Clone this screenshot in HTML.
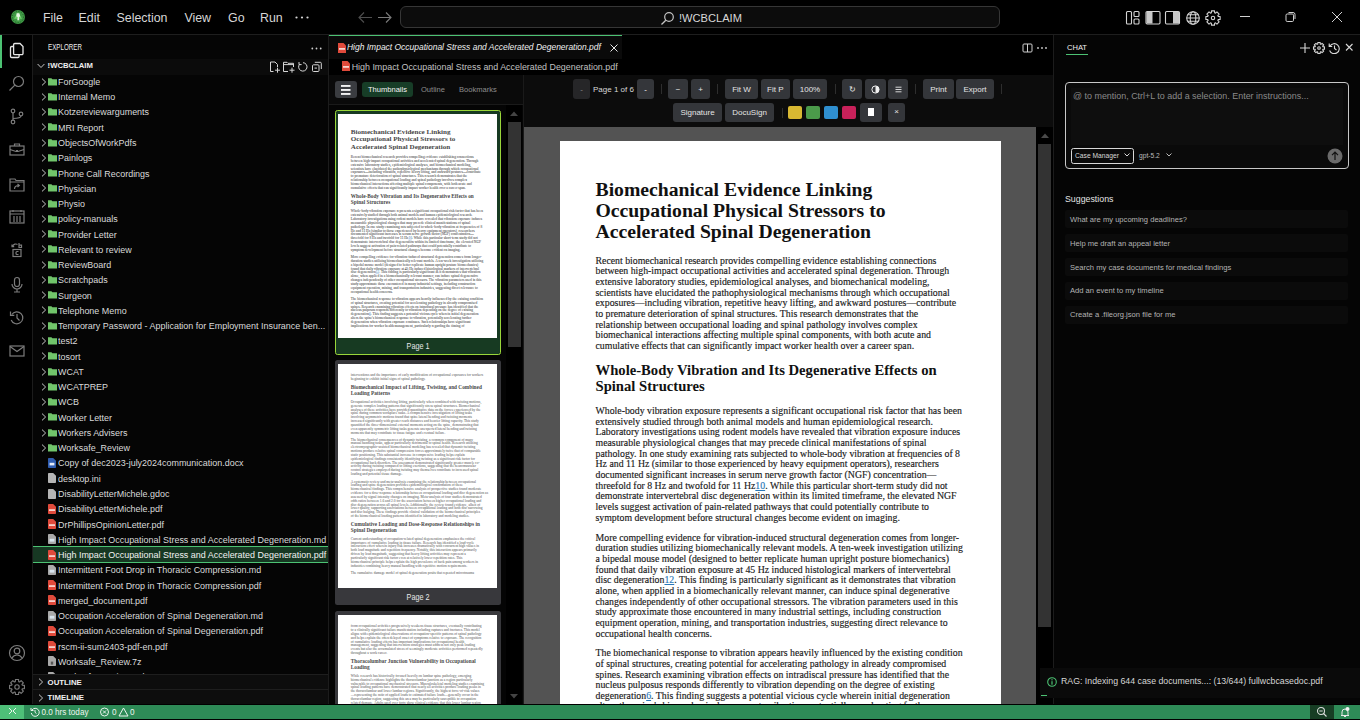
<!DOCTYPE html>
<html><head><meta charset="utf-8"><style>
*{box-sizing:border-box;margin:0;padding:0}
html,body{width:1360px;height:720px;overflow:hidden;background:#000}
body{position:relative;font-family:"Liberation Sans",sans-serif;color:#d4d4d4}
.abs{position:absolute}
/* title bar */
#tb{position:absolute;left:0;top:0;width:1360px;height:35px;background:#000;border-bottom:1px solid #1e1e1e}
.menu{position:absolute;top:10.5px;font-size:12.4px;line-height:14px;color:#d6d6d6;white-space:nowrap}
#search{position:absolute;left:400px;top:6px;width:600px;height:22px;background:#0c0c0c;border:1px solid #363636;border-radius:6px}
#search .t{position:absolute;left:278px;top:5px;font-size:11.1px;line-height:13px;color:#d8d8d8}
/* activity */
#act{position:absolute;left:0;top:35px;width:33px;height:669px;background:#000;border-right:1px solid #1c1c1c}
.ai{position:absolute;left:8px}
/* sidebar */
#side{position:absolute;left:33px;top:35px;width:296px;height:669px;background:#050505;border-right:1px solid #1c1c1c;overflow:hidden}
#side .hdr{position:absolute;left:14.6px;top:7.6px;font-size:8.2px;line-height:9px;color:#ececec;transform:scaleX(0.76);transform-origin:0 0}
#side .dots{position:absolute;left:278px;top:6px;font-size:10px;color:#cfcfcf;letter-spacing:0.5px}
#root{position:absolute;left:0;top:23.7px;width:295px;height:15.9px;background:#0b0b0b}
#root .tx{position:absolute;left:14.6px;top:2.5px;font-weight:bold;font-size:7.7px;line-height:10px;color:#f0f0f0}
#tree{position:absolute;left:0;top:23.7px;width:295px;height:615.2px;overflow:hidden}
.row{position:absolute;left:0;width:295px;height:15.26px;white-space:nowrap}
.row .ch{position:absolute;left:7.5px;top:3.8px}
.row .fi{position:absolute;left:15px;top:2.8px}
.row .tx{position:absolute;left:25px;top:2.2px;font-size:9.6px;line-height:11px;color:#dadada;transform:scaleX(0.933);transform-origin:0 0}
.row.sel{background:#173823;border-top:1px solid #4cc273;border-bottom:1px solid #4cc273;height:16.5px;margin-top:-0.5px}
.row.sel .tx{color:#f2f2f2;top:2.1px}
.row.sel .fi{top:3px}
.sec{position:absolute;left:0;width:295px;height:15.3px;background:#0d0d0d;border-top:1px solid #1e1e1e}
.sec .tx{position:absolute;left:14.6px;top:2.8px;font-weight:bold;font-size:7.8px;line-height:10px;color:#f0f0f0}
.sec .ch{position:absolute;left:5px;top:3.5px}
/* editor */
#ed{position:absolute;left:329px;top:35px;width:725px;height:669px;background:#000;border-right:1px solid #1c1c1c;overflow:hidden}
#tab{position:absolute;left:0;top:0;width:293px;height:23.5px;background:#0a0a0a;border-top:1px solid #4cc273}
#tab .tx{position:absolute;left:18px;top:5.5px;font-style:italic;font-size:8.47px;line-height:11px;color:#f0f0f0;white-space:nowrap}
#crumb{position:absolute;left:22.7px;top:26.5px;font-size:8.9px;line-height:11px;color:#c0c0c0;white-space:nowrap}
#pdfbar{position:absolute;left:0;top:40px;width:724px;height:52px;background:#0c0c0c}
.btn{position:absolute;height:19.5px;background:#34363a;border-radius:3px;color:#e4e4e4;font-size:8px;line-height:21px;text-align:center;white-space:nowrap}
.sep{position:absolute;width:1px;height:10px;background:#2e2e2e}
#thumbs{position:absolute;left:0;top:69px;width:194px;height:600px;background:#050505;border-top:1px solid #1a1a1a;overflow:hidden}
#viewer{position:absolute;left:195px;top:92px;width:529px;height:580px;background:#535353;overflow:hidden}
#vscroll{position:absolute;right:0;top:0;width:17px;height:580px;background:#000}
.page{position:absolute;background:#fff;overflow:hidden;color:#111}
.blk{position:absolute;left:35.5px;white-space:nowrap}
.tt{font-family:"Liberation Serif",serif;font-weight:bold;font-size:19.7px;line-height:21.05px;color:#111}
.h2{font-family:"Liberation Serif",serif;font-weight:bold;font-size:14.67px;line-height:16.2px;color:#111}
.bp{font-family:"Liberation Serif",serif;font-size:9.82px;line-height:10.65px;color:#1a1a1a;-webkit-text-stroke:0.15px #1a1a1a}
.bp a{color:#2a78b8;text-decoration:underline;-webkit-text-stroke:0.15px #2a78b8}
.flow{position:absolute;left:35.5px;white-space:nowrap;font-family:"Liberation Serif",serif}
.fp{font-size:9.82px;line-height:10.65px;margin-bottom:9.3px;color:#1a1a1a}
.fh{font-weight:bold;font-size:14.67px;line-height:16.2px;margin:0.5px 0 10.5px;color:#111}
.card{position:absolute;left:6px;width:166px;border-radius:2.5px}
.card .pg{position:absolute;left:3px;top:3.5px;width:159px;height:224px;background:#fff;overflow:hidden}
.card .inner{position:absolute;left:0;top:0;width:441px;height:622px;transform:scale(0.3605);transform-origin:0 0;opacity:0.8}
.card .lbl{position:absolute;left:0;width:166px;text-align:center;font-size:8.4px;line-height:10px;color:#e8e8e8;transform:scaleX(0.86)}
/* chat */
#chat{position:absolute;left:1054px;top:35px;width:306px;height:669px;background:#050505}
#status{position:absolute;left:0;top:704.6px;width:1360px;height:14.4px;background:#2e8b57}
.sug{left:10.7px;width:283.5px;height:18.2px;background:#0b0b0b;border-radius:2px}
.sug span{position:absolute;left:5.3px;top:4.6px;font-size:7.6px;line-height:10px;color:#b4b4b4;white-space:nowrap}

</style></head><body>
<div id="tb">
  <svg class="abs" style="left:10px;top:8.8px" width="16" height="16" viewBox="0 0 16 16"><circle cx="8" cy="8" r="7" fill="#3f9a45"/><circle cx="8" cy="8" r="5.6" fill="none" stroke="#1f5a26" stroke-width="0.9" stroke-dasharray="1.2 1.4"/><path d="M8 3.2l4 6.6H4z" fill="#6fd06a"/><path d="M6.6 4.2h2.8l.9 3.2-1.4.6.4 3.2H7.3l.4-3.2-1.4-.6z" fill="#e6f6e2"/></svg>
  <div class="menu" style="left:43px">File</div>
  <div class="menu" style="left:78.5px">Edit</div>
  <div class="menu" style="left:116.5px">Selection</div>
  <div class="menu" style="left:184.4px">View</div>
  <div class="menu" style="left:228px">Go</div>
  <div class="menu" style="left:260px">Run</div>
  <svg class="abs" style="left:295px;top:15.5px" width="14" height="3" viewBox="0 0 14 3"><circle cx="1.5" cy="1.5" r="1.1" fill="#d6d6d6"/><circle cx="7" cy="1.5" r="1.1" fill="#d6d6d6"/><circle cx="12.5" cy="1.5" r="1.1" fill="#d6d6d6"/></svg>
  <svg class="abs" style="left:357px;top:11px" width="36" height="13" viewBox="0 0 36 13"><path d="M15 6.5H2M7 1.5L2 6.5l5 5" fill="none" stroke="#4e4e4e" stroke-width="1.1"/><path d="M21 6.5h13M29 1.5l5 5-5 5" fill="none" stroke="#7a7a7a" stroke-width="1.1"/></svg>
  <div id="search">
    <svg class="abs" style="left:259px;top:3.5px" width="15" height="15" viewBox="0 0 15 15"><circle cx="9" cy="6" r="4.3" fill="none" stroke="#c4c4c4" stroke-width="1.2"/><path d="M5.8 9.2L1.5 13.5" stroke="#c4c4c4" stroke-width="1.3"/></svg>
    <div class="t">!WCBCLAIM</div>
  </div>
  <svg class="abs" style="left:1125px;top:9.5px" width="100" height="16" viewBox="0 0 100 16">
    <g fill="none" stroke="#d4d4d4" stroke-width="1.1">
      <rect x="1.5" y="1.5" width="5" height="12.5" rx="1"/><rect x="9" y="1.5" width="5" height="5" rx="1"/><rect x="9" y="9" width="5" height="5" rx="1"/>
      <rect x="21" y="1.5" width="14" height="12.5" rx="1.2"/>
      <rect x="40.5" y="1.5" width="14" height="12.5" rx="1.2"/>
      <circle cx="68" cy="8" r="6.3"/><ellipse cx="68" cy="8" rx="2.8" ry="6.3"/><path d="M61.7 8h12.6M62.6 4.8h10.8M62.6 11.2h10.8"/>
    </g>
    <rect x="21.5" y="2" width="6" height="11.5" fill="#c8c8c8"/>
    <rect x="48" y="2" width="6" height="11.5" fill="#c8c8c8"/>
    <path d="M86.35 2.86 L86.48 0.86 L89.52 0.86 L89.65 2.86 L90.47 3.20 L91.97 1.88 L94.12 4.03 L92.80 5.53 L93.14 6.35 L95.14 6.48 L95.14 9.52 L93.14 9.65 L92.80 10.47 L94.12 11.97 L91.97 14.12 L90.47 12.80 L89.65 13.14 L89.52 15.14 L86.48 15.14 L86.35 13.14 L85.53 12.80 L84.03 14.12 L81.88 11.97 L83.20 10.47 L82.86 9.65 L80.86 9.52 L80.86 6.48 L82.86 6.35 L83.20 5.53 L81.88 4.03 L84.03 1.88 L85.53 3.20z" fill="none" stroke="#d4d4d4" stroke-width="1.1" stroke-linejoin="round"/><circle cx="88" cy="8" r="1.7" fill="none" stroke="#d4d4d4" stroke-width="1.1"/>
  </svg>
  <svg class="abs" style="left:1238px;top:10px" width="110" height="14" viewBox="0 0 110 14">
    <path d="M2 6.5h10" stroke="#d0d0d0" stroke-width="1"/>
    <rect x="48" y="4" width="7.5" height="7.5" rx="1.2" fill="none" stroke="#d0d0d0" stroke-width="1"/><path d="M50.5 2.5h4.5a2 2 0 0 1 2 2V9" fill="none" stroke="#d0d0d0" stroke-width="1"/>
    <path d="M94 2l10 10M104 2L94 12" stroke="#d0d0d0" stroke-width="1"/>
  </svg>
</div>

<div id="act">
  <div class="abs" style="left:0;top:0;width:1.6px;height:33px;background:#4cc273"></div>
  <svg class="ai" style="top:6.5px" width="18" height="18" viewBox="0 0 18 18"><path d="M5.5 4.5h-1.8a1.2 1.2 0 0 0-1.2 1.2v8.6a1.2 1.2 0 0 0 1.2 1.2h6.2a1.2 1.2 0 0 0 1.2-1.2v-1.2" fill="none" stroke="#e6e6e6" stroke-width="1.3"/><path d="M6.8 1.5h5.2l3 3v7a1.2 1.2 0 0 1-1.2 1.2H6.8a1.2 1.2 0 0 1-1.2-1.2V2.7a1.2 1.2 0 0 1 1.2-1.2z" fill="none" stroke="#e6e6e6" stroke-width="1.3"/></svg><svg class="ai" style="top:40.0px" width="18" height="18" viewBox="0 0 18 18"><circle cx="10.5" cy="6.5" r="5" fill="none" stroke="#7c7c7c" stroke-width="1.2"/><path d="M6.8 10.2L1.5 15.5" fill="none" stroke="#7c7c7c" stroke-width="1.2"/></svg><svg class="ai" style="top:72.7px" width="18" height="18" viewBox="0 0 18 18"><circle cx="5" cy="3" r="1.8" fill="none" stroke="#7c7c7c" stroke-width="1.2"/><circle cx="5" cy="14" r="1.8" fill="none" stroke="#7c7c7c" stroke-width="1.2"/><circle cx="13" cy="6" r="1.8" fill="none" stroke="#7c7c7c" stroke-width="1.2"/><path d="M5 4.8v7.4M5 10.5c4 0 8-1 8-2.7" fill="none" stroke="#7c7c7c" stroke-width="1.2"/></svg><svg class="ai" style="top:106.0px" width="18" height="18" viewBox="0 0 18 18"><rect x="2" y="5" width="14" height="9" fill="none" stroke="#7c7c7c" stroke-width="1.2"/><path d="M6.5 5V3h5v2M2 8.5l6 2h2l6-2" fill="none" stroke="#7c7c7c" stroke-width="1.2"/><rect x="8" y="9" width="2" height="2" fill="#7c7c7c"/></svg><svg class="ai" style="top:140.7px" width="18" height="18" viewBox="0 0 18 18"><path d="M2 3h5l1 1.5h8V15H2z M2 6h14" fill="none" stroke="#7c7c7c" stroke-width="1.2"/><path d="M6.5 13c0-2.5 2-3.5 4.5-3.5M9.5 8l1.8 1.5-1.8 1.5" fill="none" stroke="#7c7c7c" stroke-width="1.2"/></svg><svg class="ai" style="top:173.4px" width="18" height="18" viewBox="0 0 18 18"><rect x="2" y="3" width="14" height="12" fill="none" stroke="#7c7c7c" stroke-width="1.2"/><path d="M2 6h14M5 2v2M13 2v2M6 8v6M9 8v6M12 8v6" fill="none" stroke="#7c7c7c" stroke-width="1.2"/></svg><svg class="ai" style="top:206.0px" width="18" height="18" viewBox="0 0 18 18"><rect x="5" y="8.5" width="8" height="7" fill="none" stroke="#7c7c7c" stroke-width="1.2"/><path d="M4.5 5.5c1-2.5 3.5-3 5-2M4 3.5v2.2h2.2M11 2v4.5h2.5V4.2H11" fill="none" stroke="#7c7c7c" stroke-width="1.2"/><path d="M10.5 10.5h-1.5a1 1 0 0 0-1 1v1a1 1 0 0 0 1 1h1.5" fill="none" stroke="#7c7c7c" stroke-width="1.2"/></svg><svg class="ai" style="top:240.7px" width="18" height="18" viewBox="0 0 18 18"><rect x="6.5" y="1.5" width="5" height="9" rx="2.5" fill="none" stroke="#7c7c7c" stroke-width="1.2"/><path d="M4 8a5 5 0 0 0 10 0M9 13v3M6 16h6" fill="none" stroke="#7c7c7c" stroke-width="1.2"/></svg><svg class="ai" style="top:273.5px" width="18" height="18" viewBox="0 0 18 18"><path d="M3.8 5.5A6 6 0 1 1 3.2 11" fill="none" stroke="#7c7c7c" stroke-width="1.2"/><path d="M2.5 2.5v3.8h3.8" fill="none" stroke="#7c7c7c" stroke-width="1.2"/><path d="M9 5v4l2.5 2.5" fill="none" stroke="#7c7c7c" stroke-width="1.2"/></svg><svg class="ai" style="top:306.5px" width="18" height="18" viewBox="0 0 18 18"><rect x="2" y="4" width="14" height="10" fill="none" stroke="#7c7c7c" stroke-width="1.2"/><path d="M2 4.5l7 5 7-5" fill="none" stroke="#7c7c7c" stroke-width="1.2"/></svg><svg class="ai" style="top:609.0px" width="18" height="18" viewBox="0 0 18 18"><circle cx="9" cy="9" r="7.5" fill="none" stroke="#7c7c7c" stroke-width="1.2"/><circle cx="9" cy="7" r="2.8" fill="none" stroke="#7c7c7c" stroke-width="1.2"/><path d="M4 14c1.5-2.5 3-3 5-3s3.5.5 5 3" fill="none" stroke="#7c7c7c" stroke-width="1.2"/></svg><svg class="ai" style="top:642.5px" width="18" height="18" viewBox="0 0 18 18"><path d="M7.29 3.67 L7.42 1.57 L10.58 1.57 L10.71 3.67 L11.56 4.02 L13.14 2.62 L15.38 4.86 L13.98 6.44 L14.33 7.29 L16.43 7.42 L16.43 10.58 L14.33 10.71 L13.98 11.56 L15.38 13.14 L13.14 15.38 L11.56 13.98 L10.71 14.33 L10.58 16.43 L7.42 16.43 L7.29 14.33 L6.44 13.98 L4.86 15.38 L2.62 13.14 L4.02 11.56 L3.67 10.71 L1.57 10.58 L1.57 7.42 L3.67 7.29 L4.02 6.44 L2.62 4.86 L4.86 2.62 L6.44 4.02z" fill="none" stroke="#7c7c7c" stroke-width="1.1" stroke-linejoin="round"/><circle cx="9" cy="9" r="2.2" fill="none" stroke="#7c7c7c" stroke-width="1.1"/></svg>
</div>

<div id="side">
  <div class="hdr">EXPLORER</div>
  <svg class="abs" style="left:278px;top:12px" width="11" height="3" viewBox="0 0 11 3"><circle cx="1.3" cy="1.5" r="0.9" fill="#cfcfcf"/><circle cx="5.5" cy="1.5" r="0.9" fill="#cfcfcf"/><circle cx="9.7" cy="1.5" r="0.9" fill="#cfcfcf"/></svg>
  <div id="root">
    <svg class="abs" style="left:3.5px;top:4.5px" width="8" height="6" viewBox="0 0 8 6"><path d="M0.6 1L4 4.5 7.4 1" fill="none" stroke="#c8c8c8" stroke-width="1"/></svg>
    <div class="tx">!WCBCLAIM</div>
    <svg class="abs" style="left:235px;top:2.2px" width="56" height="13" viewBox="0 0 56 13"><g fill="none" stroke="#d6d6d6" stroke-width="1">
      <path d="M5.5 10.5H2.5V1H7l2.5 2.5V6"/><path d="M7 9.2h5M9.5 6.7v5"/>
      <path d="M20 10.5h-4.5V1.3h3.5l1 1h5.5V6M15.5 3.6h10"/><path d="M21.5 9.2h5M24 6.7v5"/>
      <path d="M31.6 3.2A4.2 4.2 0 1 0 35 1.7"/><path d="M31 1v2.6h2.6"/>
      <rect x="44.5" y="3.8" width="6.5" height="6.7" rx="1"/><path d="M46.8 1.3h5.5a1 1 0 0 1 1 1v5.7M46.5 7.1h2.5"/>
    </g></svg>
  </div>
  <div id="tree"><div class="row" style="top:15.10px"><svg class="ch" width="6" height="8" viewBox="0 0 6 8"><path d="M1 0.6L4.6 4L1 7.4" fill="none" stroke="#c8c8c8" stroke-width="1"/></svg><svg class="fi" width="9" height="9" viewBox="0 0 9 9"><path d="M0 1.2h3.4l1 1H9V8.4H0z" fill="#71c56b"/></svg><span class="tx">ForGoogle</span></div><div class="row" style="top:30.36px"><svg class="ch" width="6" height="8" viewBox="0 0 6 8"><path d="M1 0.6L4.6 4L1 7.4" fill="none" stroke="#c8c8c8" stroke-width="1"/></svg><svg class="fi" width="9" height="9" viewBox="0 0 9 9"><path d="M0 1.2h3.4l1 1H9V8.4H0z" fill="#71c56b"/></svg><span class="tx">Internal Memo</span></div><div class="row" style="top:45.62px"><svg class="ch" width="6" height="8" viewBox="0 0 6 8"><path d="M1 0.6L4.6 4L1 7.4" fill="none" stroke="#c8c8c8" stroke-width="1"/></svg><svg class="fi" width="9" height="9" viewBox="0 0 9 9"><path d="M0 1.2h3.4l1 1H9V8.4H0z" fill="#71c56b"/></svg><span class="tx">Kotzereviewarguments</span></div><div class="row" style="top:60.88px"><svg class="ch" width="6" height="8" viewBox="0 0 6 8"><path d="M1 0.6L4.6 4L1 7.4" fill="none" stroke="#c8c8c8" stroke-width="1"/></svg><svg class="fi" width="9" height="9" viewBox="0 0 9 9"><path d="M0 1.2h3.4l1 1H9V8.4H0z" fill="#71c56b"/></svg><span class="tx">MRI Report</span></div><div class="row" style="top:76.14px"><svg class="ch" width="6" height="8" viewBox="0 0 6 8"><path d="M1 0.6L4.6 4L1 7.4" fill="none" stroke="#c8c8c8" stroke-width="1"/></svg><svg class="fi" width="9" height="9" viewBox="0 0 9 9"><path d="M0 1.2h3.4l1 1H9V8.4H0z" fill="#71c56b"/></svg><span class="tx">ObjectsOfWorkPdfs</span></div><div class="row" style="top:91.40px"><svg class="ch" width="6" height="8" viewBox="0 0 6 8"><path d="M1 0.6L4.6 4L1 7.4" fill="none" stroke="#c8c8c8" stroke-width="1"/></svg><svg class="fi" width="9" height="9" viewBox="0 0 9 9"><path d="M0 1.2h3.4l1 1H9V8.4H0z" fill="#71c56b"/></svg><span class="tx">Painlogs</span></div><div class="row" style="top:106.66px"><svg class="ch" width="6" height="8" viewBox="0 0 6 8"><path d="M1 0.6L4.6 4L1 7.4" fill="none" stroke="#c8c8c8" stroke-width="1"/></svg><svg class="fi" width="9" height="9" viewBox="0 0 9 9"><path d="M0 1.2h3.4l1 1H9V8.4H0z" fill="#71c56b"/></svg><span class="tx">Phone Call Recordings</span></div><div class="row" style="top:121.92px"><svg class="ch" width="6" height="8" viewBox="0 0 6 8"><path d="M1 0.6L4.6 4L1 7.4" fill="none" stroke="#c8c8c8" stroke-width="1"/></svg><svg class="fi" width="9" height="9" viewBox="0 0 9 9"><path d="M0 1.2h3.4l1 1H9V8.4H0z" fill="#71c56b"/></svg><span class="tx">Physician</span></div><div class="row" style="top:137.18px"><svg class="ch" width="6" height="8" viewBox="0 0 6 8"><path d="M1 0.6L4.6 4L1 7.4" fill="none" stroke="#c8c8c8" stroke-width="1"/></svg><svg class="fi" width="9" height="9" viewBox="0 0 9 9"><path d="M0 1.2h3.4l1 1H9V8.4H0z" fill="#71c56b"/></svg><span class="tx">Physio</span></div><div class="row" style="top:152.44px"><svg class="ch" width="6" height="8" viewBox="0 0 6 8"><path d="M1 0.6L4.6 4L1 7.4" fill="none" stroke="#c8c8c8" stroke-width="1"/></svg><svg class="fi" width="9" height="9" viewBox="0 0 9 9"><path d="M0 1.2h3.4l1 1H9V8.4H0z" fill="#71c56b"/></svg><span class="tx">policy-manuals</span></div><div class="row" style="top:167.70px"><svg class="ch" width="6" height="8" viewBox="0 0 6 8"><path d="M1 0.6L4.6 4L1 7.4" fill="none" stroke="#c8c8c8" stroke-width="1"/></svg><svg class="fi" width="9" height="9" viewBox="0 0 9 9"><path d="M0 1.2h3.4l1 1H9V8.4H0z" fill="#71c56b"/></svg><span class="tx">Provider Letter</span></div><div class="row" style="top:182.96px"><svg class="ch" width="6" height="8" viewBox="0 0 6 8"><path d="M1 0.6L4.6 4L1 7.4" fill="none" stroke="#c8c8c8" stroke-width="1"/></svg><svg class="fi" width="9" height="9" viewBox="0 0 9 9"><path d="M0 1.2h3.4l1 1H9V8.4H0z" fill="#71c56b"/></svg><span class="tx">Relevant to review</span></div><div class="row" style="top:198.22px"><svg class="ch" width="6" height="8" viewBox="0 0 6 8"><path d="M1 0.6L4.6 4L1 7.4" fill="none" stroke="#c8c8c8" stroke-width="1"/></svg><svg class="fi" width="9" height="9" viewBox="0 0 9 9"><path d="M0 1.2h3.4l1 1H9V8.4H0z" fill="#71c56b"/></svg><span class="tx">ReviewBoard</span></div><div class="row" style="top:213.48px"><svg class="ch" width="6" height="8" viewBox="0 0 6 8"><path d="M1 0.6L4.6 4L1 7.4" fill="none" stroke="#c8c8c8" stroke-width="1"/></svg><svg class="fi" width="9" height="9" viewBox="0 0 9 9"><path d="M0 1.2h3.4l1 1H9V8.4H0z" fill="#71c56b"/></svg><span class="tx">Scratchpads</span></div><div class="row" style="top:228.74px"><svg class="ch" width="6" height="8" viewBox="0 0 6 8"><path d="M1 0.6L4.6 4L1 7.4" fill="none" stroke="#c8c8c8" stroke-width="1"/></svg><svg class="fi" width="9" height="9" viewBox="0 0 9 9"><path d="M0 1.2h3.4l1 1H9V8.4H0z" fill="#71c56b"/></svg><span class="tx">Surgeon</span></div><div class="row" style="top:244.00px"><svg class="ch" width="6" height="8" viewBox="0 0 6 8"><path d="M1 0.6L4.6 4L1 7.4" fill="none" stroke="#c8c8c8" stroke-width="1"/></svg><svg class="fi" width="9" height="9" viewBox="0 0 9 9"><path d="M0 1.2h3.4l1 1H9V8.4H0z" fill="#71c56b"/></svg><span class="tx">Telephone Memo</span></div><div class="row" style="top:259.26px"><svg class="ch" width="6" height="8" viewBox="0 0 6 8"><path d="M1 0.6L4.6 4L1 7.4" fill="none" stroke="#c8c8c8" stroke-width="1"/></svg><svg class="fi" width="9" height="9" viewBox="0 0 9 9"><path d="M0 1.2h3.4l1 1H9V8.4H0z" fill="#71c56b"/></svg><span class="tx">Temporary Password - Application for Employment Insurance ben...</span></div><div class="row" style="top:274.52px"><svg class="ch" width="6" height="8" viewBox="0 0 6 8"><path d="M1 0.6L4.6 4L1 7.4" fill="none" stroke="#c8c8c8" stroke-width="1"/></svg><svg class="fi" width="9" height="9" viewBox="0 0 9 9"><path d="M0 1.2h3.4l1 1H9V8.4H0z" fill="#71c56b"/></svg><span class="tx">test2</span></div><div class="row" style="top:289.78px"><svg class="ch" width="6" height="8" viewBox="0 0 6 8"><path d="M1 0.6L4.6 4L1 7.4" fill="none" stroke="#c8c8c8" stroke-width="1"/></svg><svg class="fi" width="9" height="9" viewBox="0 0 9 9"><path d="M0 1.2h3.4l1 1H9V8.4H0z" fill="#71c56b"/></svg><span class="tx">tosort</span></div><div class="row" style="top:305.04px"><svg class="ch" width="6" height="8" viewBox="0 0 6 8"><path d="M1 0.6L4.6 4L1 7.4" fill="none" stroke="#c8c8c8" stroke-width="1"/></svg><svg class="fi" width="9" height="9" viewBox="0 0 9 9"><path d="M0 1.2h3.4l1 1H9V8.4H0z" fill="#71c56b"/></svg><span class="tx">WCAT</span></div><div class="row" style="top:320.30px"><svg class="ch" width="6" height="8" viewBox="0 0 6 8"><path d="M1 0.6L4.6 4L1 7.4" fill="none" stroke="#c8c8c8" stroke-width="1"/></svg><svg class="fi" width="9" height="9" viewBox="0 0 9 9"><path d="M0 1.2h3.4l1 1H9V8.4H0z" fill="#71c56b"/></svg><span class="tx">WCATPREP</span></div><div class="row" style="top:335.56px"><svg class="ch" width="6" height="8" viewBox="0 0 6 8"><path d="M1 0.6L4.6 4L1 7.4" fill="none" stroke="#c8c8c8" stroke-width="1"/></svg><svg class="fi" width="9" height="9" viewBox="0 0 9 9"><path d="M0 1.2h3.4l1 1H9V8.4H0z" fill="#71c56b"/></svg><span class="tx">WCB</span></div><div class="row" style="top:350.82px"><svg class="ch" width="6" height="8" viewBox="0 0 6 8"><path d="M1 0.6L4.6 4L1 7.4" fill="none" stroke="#c8c8c8" stroke-width="1"/></svg><svg class="fi" width="9" height="9" viewBox="0 0 9 9"><path d="M0 1.2h3.4l1 1H9V8.4H0z" fill="#71c56b"/></svg><span class="tx">Worker Letter</span></div><div class="row" style="top:366.08px"><svg class="ch" width="6" height="8" viewBox="0 0 6 8"><path d="M1 0.6L4.6 4L1 7.4" fill="none" stroke="#c8c8c8" stroke-width="1"/></svg><svg class="fi" width="9" height="9" viewBox="0 0 9 9"><path d="M0 1.2h3.4l1 1H9V8.4H0z" fill="#71c56b"/></svg><span class="tx">Workers Advisers</span></div><div class="row" style="top:381.34px"><svg class="ch" width="6" height="8" viewBox="0 0 6 8"><path d="M1 0.6L4.6 4L1 7.4" fill="none" stroke="#c8c8c8" stroke-width="1"/></svg><svg class="fi" width="9" height="9" viewBox="0 0 9 9"><path d="M0 1.2h3.4l1 1H9V8.4H0z" fill="#71c56b"/></svg><span class="tx">Worksafe_Review</span></div><div class="row" style="top:396.60px"><svg class="fi" width="8" height="10" viewBox="0 0 8 10"><path d="M0 0.8a0.8 0.8 0 0 1 0.8-0.8h4.4L8 2.8v6.4a0.8 0.8 0 0 1-0.8 0.8H0.8A0.8 0.8 0 0 1 0 9.2z" fill="#2f5db0"/><rect x="1.6" y="4.8" width="4.8" height="2.6" fill="#e8eef8"/></svg><span class="tx">Copy of dec2023-july2024communication.docx</span></div><div class="row" style="top:411.86px"><svg class="fi" width="8" height="10" viewBox="0 0 8 10"><path d="M0 0.8a0.8 0.8 0 0 1 0.8-0.8h4.4L8 2.8v6.4a0.8 0.8 0 0 1-0.8 0.8H0.8A0.8 0.8 0 0 1 0 9.2z" fill="#b5b5b5"/></svg><span class="tx">desktop.ini</span></div><div class="row" style="top:427.12px"><svg class="fi" width="8" height="10" viewBox="0 0 8 10"><path d="M0 0.8a0.8 0.8 0 0 1 0.8-0.8h4.4L8 2.8v6.4a0.8 0.8 0 0 1-0.8 0.8H0.8A0.8 0.8 0 0 1 0 9.2z" fill="#b5b5b5"/></svg><span class="tx">DisabilityLetterMichele.gdoc</span></div><div class="row" style="top:442.38px"><svg class="fi" width="8" height="10" viewBox="0 0 8 10"><path d="M0 0.8a0.8 0.8 0 0 1 0.8-0.8h4.4L8 2.8v6.4a0.8 0.8 0 0 1-0.8 0.8H0.8A0.8 0.8 0 0 1 0 9.2z" fill="#e04a3b"/><rect x="1" y="5.2" width="6" height="1.8" fill="#f6d2cc"/></svg><span class="tx">DisabilityLetterMichele.pdf</span></div><div class="row" style="top:457.64px"><svg class="fi" width="8" height="10" viewBox="0 0 8 10"><path d="M0 0.8a0.8 0.8 0 0 1 0.8-0.8h4.4L8 2.8v6.4a0.8 0.8 0 0 1-0.8 0.8H0.8A0.8 0.8 0 0 1 0 9.2z" fill="#e04a3b"/><rect x="1" y="5.2" width="6" height="1.8" fill="#f6d2cc"/></svg><span class="tx">DrPhillipsOpinionLetter.pdf</span></div><div class="row" style="top:472.90px"><svg class="fi" width="8" height="10" viewBox="0 0 8 10"><path d="M0 0.8a0.8 0.8 0 0 1 0.8-0.8h4.4L8 2.8v6.4a0.8 0.8 0 0 1-0.8 0.8H0.8A0.8 0.8 0 0 1 0 9.2z" fill="#a9a9a9"/><rect x="1.6" y="4.8" width="4.8" height="2.8" fill="#d8e4ee"/></svg><span class="tx">High Impact Occupational Stress and Accelerated Degeneration.md</span></div><div class="row sel" style="top:488.16px"><svg class="fi" width="8" height="10" viewBox="0 0 8 10"><path d="M0 0.8a0.8 0.8 0 0 1 0.8-0.8h4.4L8 2.8v6.4a0.8 0.8 0 0 1-0.8 0.8H0.8A0.8 0.8 0 0 1 0 9.2z" fill="#e04a3b"/><rect x="1" y="5.2" width="6" height="1.8" fill="#f6d2cc"/></svg><span class="tx">High Impact Occupational Stress and Accelerated Degeneration.pdf</span></div><div class="row" style="top:503.42px"><svg class="fi" width="8" height="10" viewBox="0 0 8 10"><path d="M0 0.8a0.8 0.8 0 0 1 0.8-0.8h4.4L8 2.8v6.4a0.8 0.8 0 0 1-0.8 0.8H0.8A0.8 0.8 0 0 1 0 9.2z" fill="#a9a9a9"/><rect x="1.6" y="4.8" width="4.8" height="2.8" fill="#d8e4ee"/></svg><span class="tx">Intermittent Foot Drop in Thoracic Compression.md</span></div><div class="row" style="top:518.68px"><svg class="fi" width="8" height="10" viewBox="0 0 8 10"><path d="M0 0.8a0.8 0.8 0 0 1 0.8-0.8h4.4L8 2.8v6.4a0.8 0.8 0 0 1-0.8 0.8H0.8A0.8 0.8 0 0 1 0 9.2z" fill="#e04a3b"/><rect x="1" y="5.2" width="6" height="1.8" fill="#f6d2cc"/></svg><span class="tx">Intermittent Foot Drop in Thoracic Compression.pdf</span></div><div class="row" style="top:533.94px"><svg class="fi" width="8" height="10" viewBox="0 0 8 10"><path d="M0 0.8a0.8 0.8 0 0 1 0.8-0.8h4.4L8 2.8v6.4a0.8 0.8 0 0 1-0.8 0.8H0.8A0.8 0.8 0 0 1 0 9.2z" fill="#e04a3b"/><rect x="1" y="5.2" width="6" height="1.8" fill="#f6d2cc"/></svg><span class="tx">merged_document.pdf</span></div><div class="row" style="top:549.20px"><svg class="fi" width="8" height="10" viewBox="0 0 8 10"><path d="M0 0.8a0.8 0.8 0 0 1 0.8-0.8h4.4L8 2.8v6.4a0.8 0.8 0 0 1-0.8 0.8H0.8A0.8 0.8 0 0 1 0 9.2z" fill="#a9a9a9"/><rect x="1.6" y="4.8" width="4.8" height="2.8" fill="#d8e4ee"/></svg><span class="tx">Occupation Acceleration of Spinal Degeneration.md</span></div><div class="row" style="top:564.46px"><svg class="fi" width="8" height="10" viewBox="0 0 8 10"><path d="M0 0.8a0.8 0.8 0 0 1 0.8-0.8h4.4L8 2.8v6.4a0.8 0.8 0 0 1-0.8 0.8H0.8A0.8 0.8 0 0 1 0 9.2z" fill="#e04a3b"/><rect x="1" y="5.2" width="6" height="1.8" fill="#f6d2cc"/></svg><span class="tx">Occupation Acceleration of Spinal Degeneration.pdf</span></div><div class="row" style="top:579.72px"><svg class="fi" width="8" height="10" viewBox="0 0 8 10"><path d="M0 0.8a0.8 0.8 0 0 1 0.8-0.8h4.4L8 2.8v6.4a0.8 0.8 0 0 1-0.8 0.8H0.8A0.8 0.8 0 0 1 0 9.2z" fill="#e04a3b"/><rect x="1" y="5.2" width="6" height="1.8" fill="#f6d2cc"/></svg><span class="tx">rscm-ii-sum2403-pdf-en.pdf</span></div><div class="row" style="top:594.98px"><svg class="fi" width="8" height="10" viewBox="0 0 8 10"><path d="M0 0.8a0.8 0.8 0 0 1 0.8-0.8h4.4L8 2.8v6.4a0.8 0.8 0 0 1-0.8 0.8H0.8A0.8 0.8 0 0 1 0 9.2z" fill="#a9a9a9"/><rect x="2.8" y="5.6" width="2.4" height="3" fill="#555"/></svg><span class="tx">Worksafe_Review.7z</span></div><div class="row" style="top:610.24px"><svg class="fi" width="8" height="10" viewBox="0 0 8 10"><path d="M0 0.8a0.8 0.8 0 0 1 0.8-0.8h4.4L8 2.8v6.4a0.8 0.8 0 0 1-0.8 0.8H0.8A0.8 0.8 0 0 1 0 9.2z" fill="#a9a9a9"/><rect x="1.6" y="4.8" width="4.8" height="2.8" fill="#d8e4ee"/></svg><span class="tx">Worksafe_Review.md</span></div></div>
  <div class="sec" style="top:638.9px"><svg class="ch" width="6" height="8" viewBox="0 0 6 8"><path d="M1 0.6L4.6 4L1 7.4" fill="none" stroke="#c8c8c8" stroke-width="1"/></svg><div class="tx">OUTLINE</div></div>
  <div class="sec" style="top:654.2px"><svg class="ch" width="6" height="8" viewBox="0 0 6 8"><path d="M1 0.6L4.6 4L1 7.4" fill="none" stroke="#c8c8c8" stroke-width="1"/></svg><div class="tx">TIMELINE</div></div>
</div>

<div id="ed">
  <div id="tab">
    <svg class="abs" style="left:8.5px;top:6.5px" width="8" height="10" viewBox="0 0 8 10"><path d="M0 0h5.5L8 2.5V10H0z" fill="#e04a3b"/><rect x="1" y="5" width="6" height="1.8" fill="#f6d2cc"/></svg>
    <div class="tx">High Impact Occupational Stress and Accelerated Degeneration.pdf</div>
    <svg class="abs" style="left:281px;top:8px" width="8" height="8" viewBox="0 0 8 8"><path d="M0.5 0.5l7 7M7.5 0.5l-7 7" stroke="#e8e8e8" stroke-width="1"/></svg>
  </div>
  <svg class="abs" style="left:12.5px;top:25.5px" width="8" height="10" viewBox="0 0 8 10"><path d="M0 0h5.5L8 2.5V10H0z" fill="#e04a3b"/><rect x="1" y="5" width="6" height="1.8" fill="#f6d2cc"/></svg>
  <div id="crumb">High Impact Occupational Stress and Accelerated Degeneration.pdf</div>
  <svg class="abs" style="left:693px;top:8px" width="28" height="10" viewBox="0 0 28 10"><rect x="1" y="1" width="9" height="8" rx="1" fill="none" stroke="#cfcfcf" stroke-width="1"/><path d="M5.5 1v8" stroke="#cfcfcf" stroke-width="1"/><circle cx="16" cy="5" r="0.9" fill="#cfcfcf"/><circle cx="20" cy="5" r="0.9" fill="#cfcfcf"/><circle cx="24" cy="5" r="0.9" fill="#cfcfcf"/></svg>

  <div id="pdfbar">
    <!-- thumbs toolbar -->
    <div class="abs" style="left:0;top:0;width:194px;height:29.7px;background:#0a0a0a"></div>
    <div class="btn" style="left:6px;top:6.2px;width:22px;height:16.6px;background:#3a3c40"></div>
    <svg class="abs" style="left:12px;top:9.5px" width="10" height="10" viewBox="0 0 10 10"><rect x="0" y="0" width="9.5" height="1.9" fill="#f2f2f2"/><rect x="0" y="4" width="9.5" height="1.9" fill="#f2f2f2"/><rect x="0" y="8" width="9.5" height="1.9" fill="#f2f2f2"/></svg>
    <div class="btn" style="left:33px;top:6.9px;width:51px;height:15px;line-height:15px;background:#173d27;color:#f4f4f4;font-size:7.55px">Thumbnails</div>
    <div class="abs" style="left:92px;top:9.5px;font-size:7.55px;line-height:10px;color:#8e8e8e">Outline</div>
    <div class="abs" style="left:130px;top:9.5px;font-size:7.55px;line-height:10px;color:#8e8e8e">Bookmarks</div>
    
    <!-- row 1 -->
    <div class="btn" style="left:244px;top:4.3px;width:17px;background:#262628;color:#8a8a8a">-</div>
    <div class="abs" style="left:264px;top:10px;font-size:8px;line-height:10px;color:#d8d8d8;white-space:nowrap">Page 1 of 6</div>
    <div class="btn" style="left:308px;top:4.3px;width:17px;color:#fff">-</div>
    <div class="sep" style="left:332px;top:9px"></div>
    <div class="btn" style="left:339px;top:4.3px;width:20px">−</div>
    <div class="btn" style="left:362px;top:4.3px;width:19px">+</div>
    <div class="sep" style="left:388px;top:9px"></div>
    <div class="btn" style="left:396px;top:4.3px;width:33px">Fit W</div>
    <div class="btn" style="left:432px;top:4.3px;width:28.7px">Fit P</div>
    <div class="btn" style="left:464px;top:4.3px;width:34px">100%</div>
    <div class="sep" style="left:506px;top:9px"></div>
    <div class="btn" style="left:513px;top:4.3px;width:20px">↻</div>
    <div class="btn" style="left:536px;top:4.3px;width:21px"></div><svg class="abs" style="left:542px;top:10px" width="9" height="9" viewBox="0 0 9 9"><circle cx="4.5" cy="4.5" r="3.6" fill="none" stroke="#f0f0f0" stroke-width="1"/><path d="M4.5 0.9a3.6 3.6 0 0 1 0 7.2z" fill="#f0f0f0"/></svg>
    <div class="btn" style="left:559px;top:4.3px;width:20px"></div><svg class="abs" style="left:566px;top:11px" width="7" height="7" viewBox="0 0 7 7"><path d="M0.5 1.2h6M0.5 3.5h6M0.5 5.8h6" stroke="#e8e8e8" stroke-width="0.9"/></svg>
    <div class="sep" style="left:586px;top:9px"></div>
    <div class="btn" style="left:594px;top:4.3px;width:31px">Print</div>
    <div class="btn" style="left:627px;top:4.3px;width:38px">Export</div>
    <div class="sep" style="left:672px;top:9px"></div>
    <!-- row 2 -->
    <div class="btn" style="left:344px;top:28px;width:49px;height:18.5px;line-height:20px">Signature</div>
    <div class="btn" style="left:396px;top:28px;width:49px;height:18.5px;line-height:20px">DocuSign</div>
    <div class="sep" style="left:453px;top:32.5px"></div>
    <div class="abs" style="left:459px;top:31px;width:14px;height:13px;border-radius:2px;background:#d8b832"></div>
    <div class="abs" style="left:477px;top:31px;width:14px;height:13px;border-radius:2px;background:#4b9a4a"></div>
    <div class="abs" style="left:495px;top:31px;width:14px;height:13px;border-radius:2px;background:#2f8fd0"></div>
    <div class="abs" style="left:513px;top:31px;width:14px;height:13px;border-radius:2px;background:#c8215a"></div>
    <div class="btn" style="left:531px;top:28px;width:22px;height:18.5px"></div>
    <div class="abs" style="left:539px;top:33px;width:6px;height:8px;background:#fff"></div>
    <div class="btn" style="left:559px;top:28px;width:17px;height:18.5px;line-height:18px;font-size:8px">×</div>
  </div>

  <div id="thumbs">
    <div class="card" style="top:5.3px;height:244.7px;background:#173a22;border:1.5px solid #9ad63a">
      <div class="pg" style="left:1.5px;top:2.5px"><div class="inner"><div class="blk tt" style="top:38.3px"><div class="ln">Biomechanical Evidence Linking</div><div class="ln">Occupational Physical Stressors to</div><div class="ln">Accelerated Spinal Degeneration</div></div><div class="blk bp" style="top:114.6px"><div class="ln">Recent biomechanical research provides compelling evidence establishing connections</div><div class="ln">between high-impact occupational activities and accelerated spinal degeneration. Through</div><div class="ln">extensive laboratory studies, epidemiological analyses, and biomechanical modeling,</div><div class="ln">scientists have elucidated the pathophysiological mechanisms through which occupational</div><div class="ln">exposures—including vibration, repetitive heavy lifting, and awkward postures—contribute</div><div class="ln">to premature deterioration of spinal structures. This research demonstrates that the</div><div class="ln">relationship between occupational loading and spinal pathology involves complex</div><div class="ln">biomechanical interactions affecting multiple spinal components, with both acute and</div><div class="ln">cumulative effects that can significantly impact worker health over a career span.</div></div><div class="blk h2" style="top:220.6px"><div class="ln">Whole-Body Vibration and Its Degenerative Effects on</div><div class="ln">Spinal Structures</div></div><div class="blk bp" style="top:265.1px"><div class="ln">Whole-body vibration exposure represents a significant occupational risk factor that has been</div><div class="ln">extensively studied through both animal models and human epidemiological research.</div><div class="ln">Laboratory investigations using rodent models have revealed that vibration exposure induces</div><div class="ln">measurable physiological changes that may precede clinical manifestations of spinal</div><div class="ln">pathology. In one study examining rats subjected to whole-body vibration at frequencies of 8</div><div class="ln">Hz and 11 Hz (similar to those experienced by heavy equipment operators), researchers</div><div class="ln">documented significant increases in serum nerve growth factor (NGF) concentration—</div><div class="ln">threefold for 8 Hz and twofold for 11 Hz<a>10</a>. While this particular short-term study did not</div><div class="ln">demonstrate intervertebral disc degeneration within its limited timeframe, the elevated NGF</div><div class="ln">levels suggest activation of pain-related pathways that could potentially contribute to</div><div class="ln">symptom development before structural changes become evident on imaging.</div></div><div class="blk bp" style="top:391.6px"><div class="ln">More compelling evidence for vibration-induced structural degeneration comes from longer-</div><div class="ln">duration studies utilizing biomechanically relevant models. A ten-week investigation utilizing</div><div class="ln">a bipedal mouse model (designed to better replicate human upright posture biomechanics)</div><div class="ln">found that daily vibration exposure at 45 Hz induced histological markers of intervertebral</div><div class="ln">disc degeneration<a>12</a>. This finding is particularly significant as it demonstrates that vibration</div><div class="ln">alone, when applied in a biomechanically relevant manner, can induce spinal degenerative</div><div class="ln">changes independently of other occupational stressors. The vibration parameters used in this</div><div class="ln">study approximate those encountered in many industrial settings, including construction</div><div class="ln">equipment operation, mining, and transportation industries, suggesting direct relevance to</div><div class="ln">occupational health concerns.</div></div><div class="blk bp" style="top:507.2px"><div class="ln">The biomechanical response to vibration appears heavily influenced by the existing condition</div><div class="ln">of spinal structures, creating potential for accelerating pathology in already compromised</div><div class="ln">spines. Research examining vibration effects on intradiscal pressure has identified that the</div><div class="ln">nucleus pulposus responds differently to vibration depending on the degree of existing</div><div class="ln">degeneration<a>6</a>. This finding suggests a potential vicious cycle wherein initial degeneration</div><div class="ln">alters the spine's biomechanical response to vibration, potentially accelerating further</div><div class="ln">degeneration when vibration exposure continues. Such relationships have significant</div><div class="ln">implications for worker health management, particularly regarding the timing of</div></div></div></div>
      <div class="lbl" style="top:230px;left:-1.5px">Page 1</div>
    </div>
    <div class="card" style="top:255.3px;height:244.5px;background:#38383c">
      <div class="pg"><div class="inner"><div class="flow" style="top:26px"><div class="fp"><div class="ln">interventions and the importance of early modification of occupational exposures for workers</div><div class="ln">beginning to exhibit initial signs of spinal pathology.</div></div><div class="fh"><div class="ln">Biomechanical Impact of Lifting, Twisting, and Combined</div><div class="ln">Loading Patterns</div></div><div class="fp"><div class="ln">Occupational activities involving lifting, particularly when combined with twisting motions,</div><div class="ln">generate complex loading patterns that significantly stress spinal structures. Biomechanical</div><div class="ln">analyses of these activities have provided quantitative data on the forces experienced by the</div><div class="ln">spine during common workplace tasks. A comprehensive investigation of lifting tasks</div><div class="ln">involving asymmetric motions found that spine lateral bending and twisting moments</div><div class="ln">increased significantly with greater reach distances and heavier lifting capacity. This study</div><div class="ln">quantified the three-dimensional external moments acting on the spine, demonstrating that</div><div class="ln">even apparently symmetric lifting tasks generate unexpected lateral bending and twisting</div><div class="ln">moments that may contribute to tissue fatigue and eventual failure.</div></div><div class="fp"><div class="ln">The biomechanical consequences of dynamic twisting, a common component of many</div><div class="ln">manual handling tasks, appear particularly detrimental to spinal health. Research utilizing</div><div class="ln">electromyographic-assisted biomechanical modeling has revealed that dynamic twisting</div><div class="ln">motions produce relative spinal compression forces approximately twice that of comparable</div><div class="ln">static positioning. This substantial increase in compressive loading helps explain</div><div class="ln">epidemiological findings consistently identifying twisting as a significant risk factor for</div><div class="ln">occupational back disorders. The assessment demonstrated significantly greater muscle co-</div><div class="ln">activity during twisting compared to lifting exertions, suggesting that the neuromuscular</div><div class="ln">control strategies employed during twisting may themselves contribute to increased spinal</div><div class="ln">loading and potential tissue damage.</div></div><div class="fp"><div class="ln">A systematic review and meta-analysis examining the relationship between occupational</div><div class="ln">loading and spine degeneration provides epidemiological confirmation of these</div><div class="ln">biomechanical findings. This comprehensive analysis of prospective studies found moderate</div><div class="ln">evidence for a dose-response relationship between occupational loading and disc degeneration as</div><div class="ln">assessed by signal intensity changes on imaging. Meta-analysis of four studies demonstrated</div><div class="ln">odds ratios between 1.6 and 2.0 for the association between higher occupational loading and</div><div class="ln">disc degeneration across all spinal levels. Additionally, the review found evidence, albeit of</div><div class="ln">lower quality, supporting associations between occupational loading and both disc narrowing</div><div class="ln">and disc bulging. These findings provide clinical validation of the biomechanical principles</div><div class="ln">of the biomechanical loading patterns identified in laboratory and modeling studies.</div></div><div class="fh"><div class="ln">Cumulative Loading and Dose-Response Relationships in</div><div class="ln">Spinal Degeneration</div></div><div class="fp"><div class="ln">Current understanding of occupation-related spinal degeneration emphasizes the critical</div><div class="ln">importance of cumulative loading in tissue failure. Research has identified a load-cycle</div><div class="ln">interaction effect wherein injury risk increases dramatically with concurrent high values in</div><div class="ln">both load magnitude and repetition frequency. Notably, this interaction appears primarily</div><div class="ln">driven by load magnitude, suggesting that heavy lifting activities may represent a</div><div class="ln">particularly significant risk factor even at relatively lower repetition rates. This</div><div class="ln">biomechanical principle helps explain the high prevalence of back pain among workers in</div><div class="ln">industries combining heavy manual handling with repetitive motion requirements.</div></div><div class="fp"><div class="ln">The cumulative damage model of spinal degeneration posits that repeated microtrauma</div></div></div></div></div>
      <div class="lbl" style="top:231.5px">Page 2</div>
    </div>
    <div class="card" style="top:506.3px;height:244.5px;background:#38383c">
      <div class="pg"><div class="inner"><div class="flow" style="top:26px"><div class="fp"><div class="ln">from occupational activities progressively weakens tissue structures, eventually contributing</div><div class="ln">to a clinically significant failure manifestation including ruptures and fractures. This model</div><div class="ln">aligns with epidemiological observations of occupation-specific patterns of spinal pathology</div><div class="ln">and helps explain the often delayed onset of symptoms relative to exposure. The recognition</div><div class="ln">of cumulative loading effects has important implications for occupational health</div><div class="ln">management, suggesting that intervention strategies must address not only peak loading</div><div class="ln">events but also the accumulated stress of seemingly moderate activities performed repeatedly</div><div class="ln">throughout a work career.</div></div><div class="fh"><div class="ln">Thoracolumbar Junction Vulnerability in Occupational</div><div class="ln">Loading</div></div><div class="fp"><div class="ln">While research has historically focused heavily on lumbar spine pathology, emerging</div><div class="ln">biomechanical evidence highlights the thoracolumbar junction as a region particularly</div><div class="ln">vulnerable to occupational mechanical stressors. Musculoskeletal modeling studies examining</div><div class="ln">spinal loading patterns have demonstrated that nearly all activities produce loading peaks in</div><div class="ln">the thoracolumbar and lower lumbar regions. Significantly, the highest force-of-risk values</div><div class="ln">—representing the ratio of applied loads to estimated failure loads—generally occur in the</div><div class="ln">thoracolumbar region, suggesting this area may be particularly susceptible to occupation</div><div class="ln">related damage. Adults aged over forty show clinical evidence that this lower lumbar region</div></div></div></div></div>
    </div>
    <div class="abs" style="left:177px;top:0;width:16px;height:600px;background:#000"></div>
    <svg class="abs" style="left:181px;top:6px" width="8" height="5" viewBox="0 0 8 5"><path d="M0 5L4 0.5 8 5z" fill="#444"/></svg>
    <div class="abs" style="left:178.5px;top:17.3px;width:13px;height:225px;background:#333"></div>
    <svg class="abs" style="left:181px;top:589px" width="8" height="5" viewBox="0 0 8 5"><path d="M0 0L4 4.5 8 0z" fill="#444"/></svg>
  </div>

  <div class="abs" style="left:194px;top:40px;width:1px;height:629px;background:#1a1a1a;z-index:2"></div>
  <div id="viewer">
    <div class="page" style="left:36px;top:14px;width:441px;height:640px"><div class="blk tt" style="top:38.3px"><div class="ln">Biomechanical Evidence Linking</div><div class="ln">Occupational Physical Stressors to</div><div class="ln">Accelerated Spinal Degeneration</div></div><div class="blk bp" style="top:114.6px"><div class="ln">Recent biomechanical research provides compelling evidence establishing connections</div><div class="ln">between high-impact occupational activities and accelerated spinal degeneration. Through</div><div class="ln">extensive laboratory studies, epidemiological analyses, and biomechanical modeling,</div><div class="ln">scientists have elucidated the pathophysiological mechanisms through which occupational</div><div class="ln">exposures—including vibration, repetitive heavy lifting, and awkward postures—contribute</div><div class="ln">to premature deterioration of spinal structures. This research demonstrates that the</div><div class="ln">relationship between occupational loading and spinal pathology involves complex</div><div class="ln">biomechanical interactions affecting multiple spinal components, with both acute and</div><div class="ln">cumulative effects that can significantly impact worker health over a career span.</div></div><div class="blk h2" style="top:220.6px"><div class="ln">Whole-Body Vibration and Its Degenerative Effects on</div><div class="ln">Spinal Structures</div></div><div class="blk bp" style="top:265.1px"><div class="ln">Whole-body vibration exposure represents a significant occupational risk factor that has been</div><div class="ln">extensively studied through both animal models and human epidemiological research.</div><div class="ln">Laboratory investigations using rodent models have revealed that vibration exposure induces</div><div class="ln">measurable physiological changes that may precede clinical manifestations of spinal</div><div class="ln">pathology. In one study examining rats subjected to whole-body vibration at frequencies of 8</div><div class="ln">Hz and 11 Hz (similar to those experienced by heavy equipment operators), researchers</div><div class="ln">documented significant increases in serum nerve growth factor (NGF) concentration—</div><div class="ln">threefold for 8 Hz and twofold for 11 Hz<a>10</a>. While this particular short-term study did not</div><div class="ln">demonstrate intervertebral disc degeneration within its limited timeframe, the elevated NGF</div><div class="ln">levels suggest activation of pain-related pathways that could potentially contribute to</div><div class="ln">symptom development before structural changes become evident on imaging.</div></div><div class="blk bp" style="top:391.6px"><div class="ln">More compelling evidence for vibration-induced structural degeneration comes from longer-</div><div class="ln">duration studies utilizing biomechanically relevant models. A ten-week investigation utilizing</div><div class="ln">a bipedal mouse model (designed to better replicate human upright posture biomechanics)</div><div class="ln">found that daily vibration exposure at 45 Hz induced histological markers of intervertebral</div><div class="ln">disc degeneration<a>12</a>. This finding is particularly significant as it demonstrates that vibration</div><div class="ln">alone, when applied in a biomechanically relevant manner, can induce spinal degenerative</div><div class="ln">changes independently of other occupational stressors. The vibration parameters used in this</div><div class="ln">study approximate those encountered in many industrial settings, including construction</div><div class="ln">equipment operation, mining, and transportation industries, suggesting direct relevance to</div><div class="ln">occupational health concerns.</div></div><div class="blk bp" style="top:507.2px"><div class="ln">The biomechanical response to vibration appears heavily influenced by the existing condition</div><div class="ln">of spinal structures, creating potential for accelerating pathology in already compromised</div><div class="ln">spines. Research examining vibration effects on intradiscal pressure has identified that the</div><div class="ln">nucleus pulposus responds differently to vibration depending on the degree of existing</div><div class="ln">degeneration<a>6</a>. This finding suggests a potential vicious cycle wherein initial degeneration</div><div class="ln">alters the spine's biomechanical response to vibration, potentially accelerating further</div><div class="ln">degeneration when vibration exposure continues. Such relationships have significant</div><div class="ln">implications for worker health management, particularly regarding the timing of</div></div></div>
    <div id="vscroll">
      <svg class="abs" style="left:4.5px;top:6px" width="8" height="5" viewBox="0 0 8 5"><path d="M0 5L4 0.5 8 5z" fill="#4a4a4a"/></svg>
      <div class="abs" style="left:2px;top:17px;width:13px;height:483px;background:#333"></div>
    </div>
  </div>
</div>

<div id="chat">
  <div class="abs" style="left:13px;top:7.5px;font-size:7.55px;line-height:10px;color:#f0f0f0">CHAT</div>
  <div class="abs" style="left:12px;top:19px;width:22px;height:1.2px;background:#4cc273"></div>
  <svg class="abs" style="left:245.2px;top:7.3px" width="56" height="12" viewBox="0 0 56 12"><g fill="none" stroke="#d8d8d8" stroke-width="1.1">
    <path d="M6 1v10M1 6h10"/>
    <circle cx="20" cy="6" r="1.3"/><path d="M18.75 2.10 L18.83 0.52 L21.17 0.52 L21.25 2.10 L21.88 2.35 L23.05 1.30 L24.70 2.95 L23.65 4.12 L23.90 4.75 L25.48 4.83 L25.48 7.17 L23.90 7.25 L23.65 7.88 L24.70 9.05 L23.05 10.70 L21.88 9.65 L21.25 9.90 L21.17 11.48 L18.83 11.48 L18.75 9.90 L18.12 9.65 L16.95 10.70 L15.30 9.05 L16.35 7.88 L16.10 7.25 L14.52 7.17 L14.52 4.83 L16.10 4.75 L16.35 4.12 L15.30 2.95 L16.95 1.30 L18.12 2.35z" stroke-linejoin="round"/>
    <path d="M31 4A5 5 0 1 1 30.6 8.5M30.2 1.5v3h3M35.5 3.5v3l2 1.5"/>
    <path d="M47 2l6.5 6.5M53.5 2L47 8.5"/>
  </g></svg>
  <div class="abs" style="left:11.4px;top:47.3px;width:283.4px;height:87.1px;border:1px solid #c8c8c8;border-radius:4px;background:#0a0a0a"></div>
  <div class="abs" style="left:16.5px;top:53px;width:272px;height:57px;background:#0e0e0e"></div>
  <div class="abs" style="left:19px;top:55.5px;font-size:8.94px;line-height:11px;color:#8a8a8a;white-space:nowrap">@ to mention, Ctrl+L to add a selection. Enter instructions...</div>
  <div class="abs" style="left:16.9px;top:112.8px;width:62.9px;height:15.9px;border:1px solid #d8d8d8;border-radius:2.5px"></div>
  <div class="abs" style="left:21px;top:115.5px;font-size:6.7px;line-height:9px;color:#d8d8d8;white-space:nowrap">Case Manager</div>
  <svg class="abs" style="left:70px;top:118px" width="6" height="4" viewBox="0 0 6 4"><path d="M0.5 0.5L3 3 5.5 0.5" fill="none" stroke="#d8d8d8" stroke-width="1"/></svg>
  <div class="abs" style="left:85px;top:115.5px;font-size:6.7px;line-height:9px;color:#bdbdbd;white-space:nowrap">gpt-5.2</div>
  <svg class="abs" style="left:112px;top:118px" width="6" height="4" viewBox="0 0 6 4"><path d="M0.5 0.5L3 3 5.5 0.5" fill="none" stroke="#bdbdbd" stroke-width="1"/></svg>
  <svg class="abs" style="left:272.5px;top:113px" width="16" height="16" viewBox="0 0 16 16"><circle cx="8" cy="8" r="7.5" fill="#6a6a6a"/><path d="M8 12V4.5M5 7.2L8 4.2 11 7.2" fill="none" stroke="#111" stroke-width="1.2"/></svg>
  <div class="abs" style="left:11px;top:158.5px;font-size:8.8px;line-height:11px;color:#e4e4e4">Suggestions</div>
  <div class="abs sug" style="top:175px"><span>What are my upcoming deadlines?</span></div>
  <div class="abs sug" style="top:199px"><span>Help me draft an appeal letter</span></div>
  <div class="abs sug" style="top:223px"><span>Search my case documents for medical findings</span></div>
  <div class="abs sug" style="top:246.5px"><span>Add an event to my timeline</span></div>
  <div class="abs sug" style="top:270.5px"><span>Create a .fileorg.json file for me</span></div>
</div>

<div class="abs" style="left:1040px;top:667.5px;width:320px;height:30px;background:#0a0a0a">
  <svg class="abs" style="left:7px;top:9px" width="10" height="10" viewBox="0 0 10 10"><circle cx="5" cy="5" r="4.3" fill="none" stroke="#4cc273" stroke-width="1.1"/><rect x="4.4" y="2.2" width="1.2" height="1.2" fill="#4cc273"/><rect x="4.4" y="4.2" width="1.2" height="3.5" fill="#4cc273"/></svg>
  <div class="abs" style="left:21px;top:8.5px;font-size:8.77px;line-height:11px;color:#d6d6d6;white-space:nowrap">RAG: Indexing 644 case documents...: (13/644) fullwcbcasedoc.pdf</div>
  <div class="abs" style="left:1px;top:27px;width:6px;height:1px;background:#4cc273"></div>
</div>

<div id="status">
  <div class="abs" style="left:0;top:0;width:24px;height:14.4px;background:#4ebf78"></div>
  <svg class="abs" style="left:8px;top:2.5px" width="9" height="9" viewBox="0 0 9 9"><path d="M1 1l3 3-3 3M8 1L5 4l3 3" fill="none" stroke="#e8f6ec" stroke-width="1"/></svg>
  <svg class="abs" style="left:29.5px;top:2px" width="10" height="10" viewBox="0 0 10 10"><path d="M2 3A4 4 0 1 1 1.3 6" fill="none" stroke="#eaf5ee" stroke-width="1"/><path d="M1 1v2.5h2.5M5 3v2.3l1.5 1.3" fill="none" stroke="#eaf5ee" stroke-width="1"/></svg>
  <div class="abs" style="left:41.5px;top:3.2px;font-size:8.13px;line-height:10px;color:#eef6f0;white-space:nowrap">0.0 hrs today</div>
  <svg class="abs" style="left:100px;top:2px" width="36" height="10" viewBox="0 0 36 10"><circle cx="4.5" cy="5" r="4" fill="none" stroke="#eaf5ee" stroke-width="1"/><path d="M3 3.5l3 3M6 3.5l-3 3" stroke="#eaf5ee" stroke-width="1"/><path d="M23.5 1L28 9h-9z" fill="none" stroke="#eaf5ee" stroke-width="1"/></svg>
  <div class="abs" style="left:112px;top:3.2px;font-size:8.13px;line-height:10px;color:#eef6f0">0</div>
  <div class="abs" style="left:130px;top:3.2px;font-size:8.13px;line-height:10px;color:#eef6f0">0</div>
  <div class="abs" style="left:1310px;top:0;width:24px;height:14.4px;background:#173d24"></div>
  <svg class="abs" style="left:1316px;top:1.5px" width="12" height="12" viewBox="0 0 12 12"><circle cx="5" cy="5" r="3.5" fill="none" stroke="#dcdcdc" stroke-width="1.1"/><path d="M3.3 5h3.4M7.5 7.5l3 3" stroke="#dcdcdc" stroke-width="1.1"/></svg>
  <svg class="abs" style="left:1339px;top:1.5px" width="12" height="12" viewBox="0 0 12 12"><path d="M2 9.5h8M3 9.5V6a3 3 0 0 1 6 0v3.5M5 10.5h2" fill="none" stroke="#e8e8e8" stroke-width="1"/><circle cx="8.5" cy="3" r="2" fill="#f4f4f4"/></svg>
</div>

</body></html>
